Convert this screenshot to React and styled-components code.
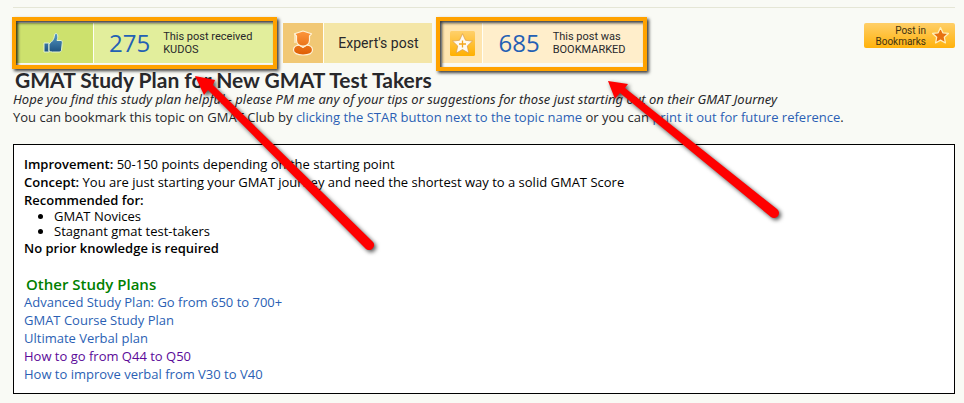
import React from 'react';
import styled, { createGlobalStyle } from 'styled-components';

const GlobalStyle = createGlobalStyle`
    * {
        box-sizing: border-box;
    }
    body {
        margin: 0;
        background: #f9faf5;
        color: #28282b;
        font-family: 'Open Sans', sans-serif;
        font-size: 13px;
        line-height: 18px;
    }
`;

const Page = styled.main`
    position: relative;
    padding: 7px 9px 9px 13px;
`;

const Toolbar = styled.header`
    display: flex;
    align-items: flex-start;
    padding-top: 15px;
    border-top: 1px solid #e5e6d6;
`;

const Badge = styled.div`
    position: relative;
    display: flex;
    height: 40px;
    margin-right: ${p => p.$gap || 0}px;
    background: ${p => p.$color};
`;

const BadgeIcon = styled.div`
    display: flex;
    align-items: center;
    justify-content: center;
    width: ${p => p.$width}px;
    border-right: 1px solid #fffef5;
    background: ${p => p.$color};
`;

const BadgeBody = styled.div`
    display: flex;
    align-items: center;
    gap: 13px;
    padding: 0 ${p => p.$right}px 0 ${p => p.$left}px;
    font-size: 14px;
`;

const Label = styled.span`
    font-family: Roboto, sans-serif;
`;

const Count = styled.strong`
    font-size: 24px;
    font-weight: normal;
    color: #2360b4;
`;

const Caption = styled.span`
    font-family: Roboto, sans-serif;
    font-size: 11px;
    line-height: 13px;
    white-space: nowrap;
`;

const Highlight = styled.span`
    position: absolute;
    top: -6px;
    right: -4px;
    bottom: ${p => p.$bottom}px;
    left: ${p => p.$left}px;
    border: 4px solid #ffa200;
    box-shadow: 2px 2px 3px #000000c0, inset 2px 2px 3px #000000c0;
`;

const BookmarkButton = styled.button`
    display: flex;
    align-items: center;
    justify-content: flex-end;
    gap: 5px;
    height: 25px;
    margin-left: auto;
    padding: 0 5px 0 11px;
    border: 0;
    border-radius: 2px;
    background: linear-gradient(#ffcf68, #ffb20c);
    color: #3f3210;
    font-family: Roboto, sans-serif;
    font-size: 10px;
    line-height: 11px;
    text-align: right;
    cursor: pointer;
`;

const Title = styled.h1`
    margin: 6px 0 0;
    padding-left: 2px;
    font-family: Lato, sans-serif;
    font-size: 21px;
    font-weight: bold;
    line-height: 21px;
`;

const Line = styled.p`
    margin: 0;
`;

const Intro = styled(Line)`
    font-family: 'Noto Sans', sans-serif;
    font-style: italic;
`;

const Link = styled.a`
    color: ${p => (p.$visited ? '#5b0a99' : '#2b5fb4')};
    text-decoration: none;
`;

const Panel = styled.section`
    margin-top: 18px;
    padding: 10px;
    border: 1px solid #000;
    background: #fff;
    color: #000;

    b {
        font-weight: 600;
    }
`;

const List = styled.ul`
    margin: 0;
    padding-left: 30px;
    line-height: 15px;
`;

const Subtitle = styled.h2`
    margin: 18px 0 0;
    padding-left: 2px;
    font-size: 15px;
    font-weight: 600;
    line-height: 18px;
    color: #008000;
`;

const Links = styled.ul`
    margin: 0;
    padding: 0;
    list-style: none;
`;

const Arrows = styled.svg`
    position: absolute;
    top: 0;
    left: 0;
    pointer-events: none;
    filter: drop-shadow(2px 2px 2px #000000b0);
`;

const STAR = 'M12 2 L15 8.6 L22 9.4 L16.8 14.2 L18.2 21.4 L12 17.8 L5.8 21.4 L7.2 14.2 L2 9.4 L9 8.6 Z';

const plans = [
    { title: 'Advanced Study Plan: Go from 650 to 700+' },
    { title: 'GMAT Course Study Plan' },
    { title: 'Ultimate Verbal plan' },
    { title: 'How to go from Q44 to Q50', visited: true },
    { title: 'How to improve verbal from V30 to V40' }
];

const ThumbIcon = () => (
    <svg width="20" height="22" viewBox="0 0 20 22">
        <defs>
            <linearGradient id="thumb" x1="0" y1="0" x2="0" y2="22" gradientUnits="userSpaceOnUse">
                <stop offset="0" stopColor="#5aa0cc" />
                <stop offset="1" stopColor="#174a78" />
            </linearGradient>
        </defs>
        <g fill="url(#thumb)" stroke="#e2f3d2" strokeWidth="1">
            <path d="M1 11h5v9H1z" />
            <path d="M6 12 C9 9.5 11 8 11.5 3 C11.7 1 14.5 .6 14.8 4 C14.8 6 14.3 7 14 8.5 H18 C19.3 8.7 19.5 10 19.2 11.5 L18.5 18 C18.2 19.4 17.5 20 16 20 H9.5 C8 20 7 19.5 6 19 Z" />
        </g>
    </svg>
);

const ExpertIcon = () => (
    <svg width="22" height="26" viewBox="0 0 22 26">
        <defs>
            <linearGradient id="expert" x1="0" y1="0" x2="0" y2="26" gradientUnits="userSpaceOnUse">
                <stop offset="0" stopColor="#ff9a40" />
                <stop offset="1" stopColor="#dd5a00" />
            </linearGradient>
        </defs>
        <g fill="url(#expert)" stroke="#fff3d8" strokeWidth="1.2" strokeLinejoin="round">
            <path d="M1.5 20 C1.5 16.5 4 15.3 7.5 15 L11 17.5 L14.5 15 C18 15.3 20.5 16.5 20.5 20 C20.5 23 17 25 11 25 S1.5 23 1.5 20 Z" />
            <path d="M2.5 3.8 L11 1 L19.5 3.8 L17.5 6 V10.5 C17.5 14 14 16.2 11 16.2 S4.5 14 4.5 10.5 V6 Z" />
            <path d="M3 4 V13" fill="none" />
        </g>
    </svg>
);

const SaveIcon = () => (
    <svg width="25" height="25" viewBox="0 0 25 25">
        <defs>
            <linearGradient id="save" x1="0" y1="0" x2="0" y2="1">
                <stop offset="0" stopColor="#ffd06b" />
                <stop offset="1" stopColor="#ffb000" />
            </linearGradient>
        </defs>
        <rect width="25" height="25" rx="1.5" fill="url(#save)" />
        <path d={STAR} transform="translate(.5 .7)" fill="#fffaf0" stroke="#d89b49" strokeWidth=".7" strokeLinejoin="round" />
        <path d="M12.5 9.5v7M9 13h7" stroke="#f3a51c" strokeWidth="1.3" />
    </svg>
);

const StarIcon = () => (
    <svg width="19" height="19" viewBox="0 0 24 24">
        <path d={STAR} fill="#e87110" stroke="#fff0bd" strokeWidth="1.6" strokeLinejoin="round" />
    </svg>
);

const App = () => (
    <>
        <GlobalStyle />
        <Page>
            <Toolbar>
                <Badge $color="#e2ee9c" $gap={10}>
                    <BadgeIcon $width={81} $color="#cde16d"><ThumbIcon /></BadgeIcon>
                    <BadgeBody $left={15} $right={21}>
                        <Count>275</Count>
                        <Caption>This post received<br />KUDOS</Caption>
                    </BadgeBody>
                    <Highlight $left={-1} $bottom={-6} />
                </Badge>
                <Badge $color="#f4e6a7" $gap={10}>
                    <BadgeIcon $width={41} $color="#f1c875"><ExpertIcon /></BadgeIcon>
                    <BadgeBody $left={14} $right={14}><Label>Expert's post</Label></BadgeBody>
                </Badge>
                <Badge $color="#ffeecb">
                    <BadgeIcon $width={41} $color="#ffe5af"><SaveIcon /></BadgeIcon>
                    <BadgeBody $left={15} $right={17}>
                        <Count>685</Count>
                        <Caption>This post was<br />BOOKMARKED</Caption>
                    </BadgeBody>
                    <Highlight $left={-6} $bottom={-8} />
                </Badge>
                <BookmarkButton type="button">
                    <span>Post in<br />Bookmarks</span>
                    <StarIcon />
                </BookmarkButton>
            </Toolbar>
            <Title>GMAT Study Plan for New GMAT Test Takers</Title>
            <Intro>
                Hope you find this study plan helpful - please PM me any of your tips or suggestions for those just starting out on their GMAT Journey
            </Intro>
            <Line>
                You can bookmark this topic on GMAT Club by <Link href="#star">clicking the STAR button next to the topic name</Link> or you can <Link href="#print">print it out for future reference</Link>.
            </Line>
            <Panel>
                <Line><b>Improvement:</b> 50-150 points depending on the starting point</Line>
                <Line><b>Concept:</b> You are just starting your GMAT journey and need the shortest way to a solid GMAT Score</Line>
                <Line><b>Recommended for:</b></Line>
                <List>
                    <li>GMAT Novices</li>
                    <li>Stagnant gmat test-takers</li>
                </List>
                <Line><b>No prior knowledge is required</b></Line>
                <Subtitle>Other Study Plans</Subtitle>
                <Links>
                    {plans.map(plan => (
                        <li key={plan.title}>
                            <Link href="#plan" $visited={plan.visited}>{plan.title}</Link>
                        </li>
                    ))}
                </Links>
            </Panel>
            <Arrows width="800" height="270" fill="#fe0000" aria-hidden="true">
                <path d="M195 76 L215 80 L213 85 L373 242 A5 5 0 0 1 366 249 L208 90 L204 95 Z" />
                <path d="M608 81 L628 84 L625 88 L777 209 A5 5 0 0 1 771 217 L620 93 L615 99 Z" />
            </Arrows>
        </Page>
    </>
);

export default App;
